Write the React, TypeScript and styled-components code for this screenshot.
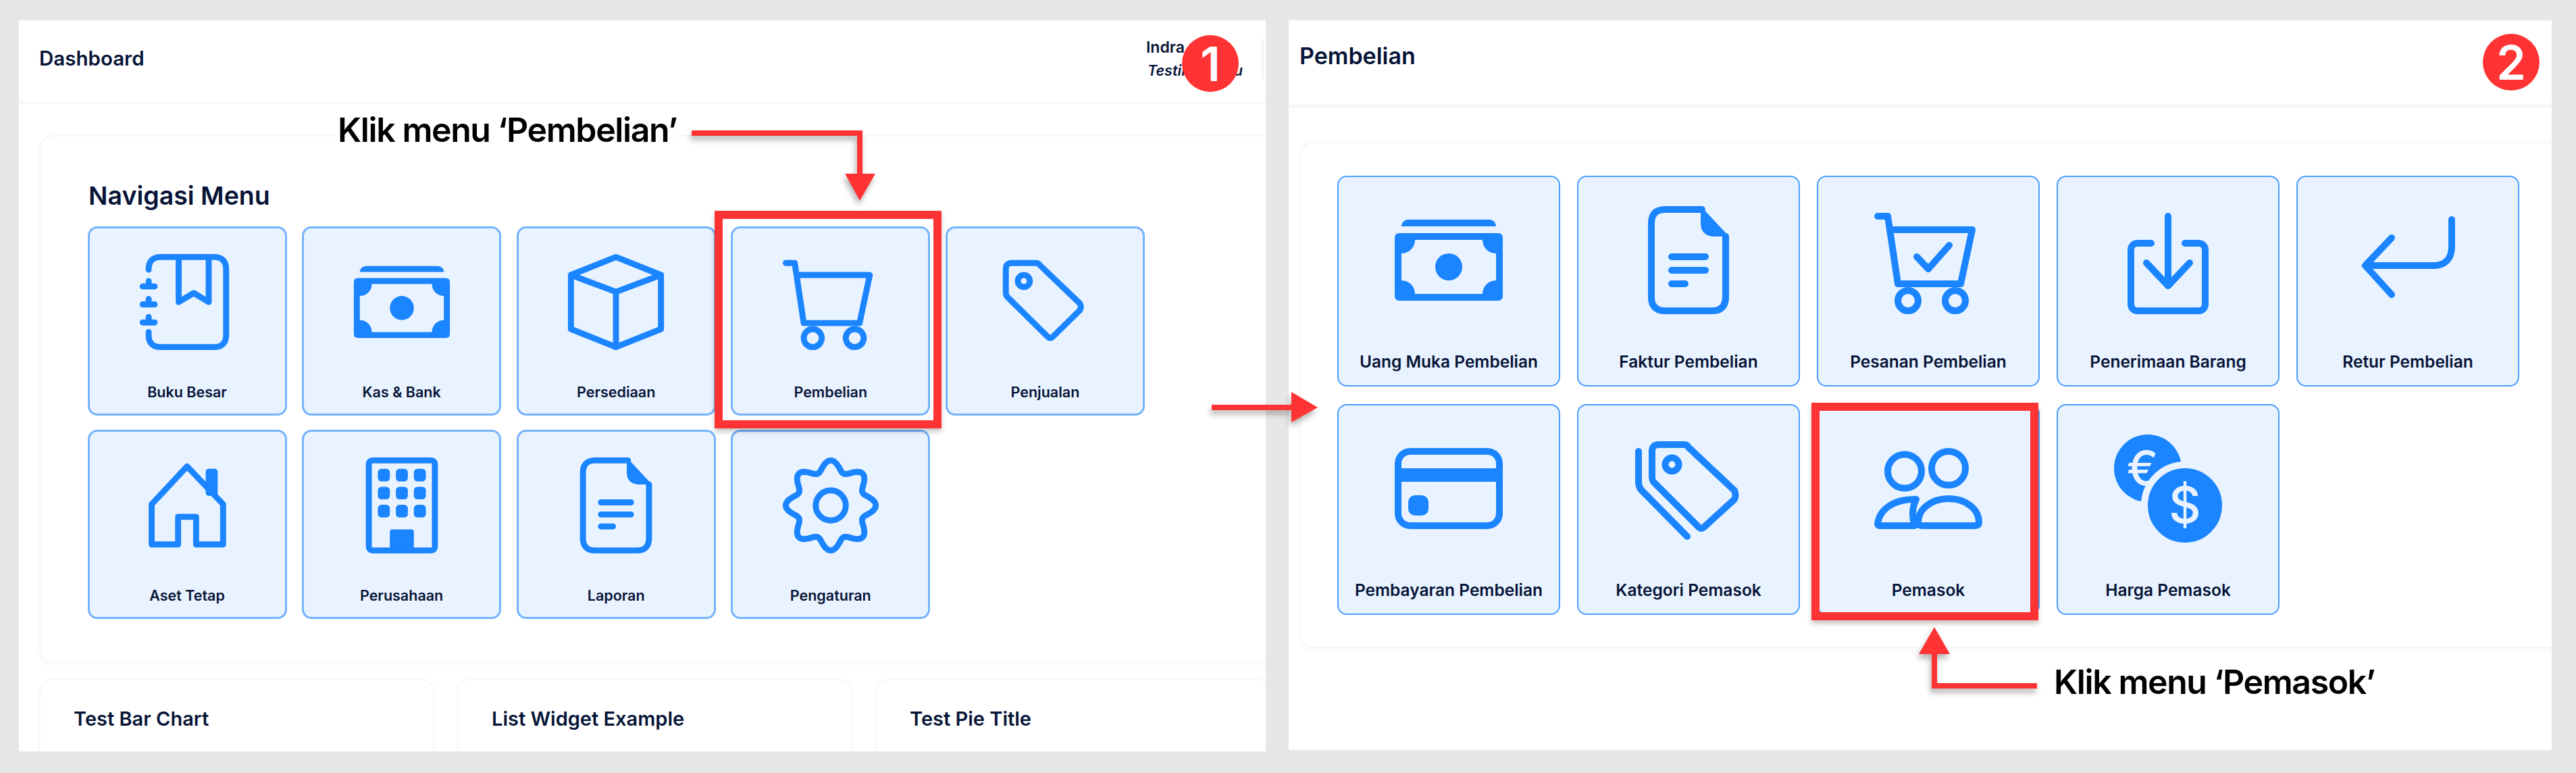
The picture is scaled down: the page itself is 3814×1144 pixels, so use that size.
import React from 'react';
import styled, { createGlobalStyle } from 'styled-components';

const BLUE = '#1B84FF';
const TILE_BG = '#E9F3FF';
const INK = '#071437';
const RED = '#FF3333';

const gearPath = () => {
  const pts: string[] = [];
  for (let i = 0; i < 160; i++) {
    const a = (i / 160) * Math.PI * 2;
    const r = 66 + 9 * Math.cos(8 * a);
    pts.push(`${(90 + r * Math.sin(a)).toFixed(1)} ${(90 - r * Math.cos(a)).toFixed(1)}`);
  }
  return `M${pts.join('L')}Z`;
};

const ICONS: Record<string, React.ReactNode> = {
  book: (
    <>
      <path d="M26 36V35C26 22 33 15 46 15H135C148 15 155 22 155 35V145C155 158 148 165 135 165H46C33 165 26 158 26 145V140" />
      <path d="M76 15V90L101 75L126 90V15" />
      <path d="M16 64H36M26 55V64M16 94H36M26 85V94M16 124H36M26 115V124" />
    </>
  ),
  cash: (
    <>
      <path
        className="solid"
        fillRule="evenodd"
        d="M17 50H163Q170 50 170 57V143Q170 150 163 150H17Q10 150 10 143V57Q10 50 17 50ZM40 60A20 20 0 0 1 20 80V120A20 20 0 0 1 40 140H140A20 20 0 0 1 160 120V80A20 20 0 0 1 140 60Z"
      />
      <path className="solid" d="M20 40C20 34 25 30 30 30H150C155 30 160 34 160 40Z" />
      <circle className="solid" cx="90" cy="100" r="20" />
    </>
  ),
  box: (
    <>
      <path d="M90 15L165 45V135L90 165L15 135V45Z" />
      <path d="M15 45L90 73L165 45M90 73V165" />
    </>
  ),
  cart: (
    <>
      <path d="M15 25H30L33 45L45 125H138L155 45H33" />
      <circle cx="60" cy="150" r="15" />
      <circle cx="130" cy="150" r="15" />
    </>
  ),
  cartCheck: (
    <>
      <path d="M15 25H30L33 45L45 125H138L155 45H33" />
      <circle cx="60" cy="150" r="15" />
      <circle cx="130" cy="150" r="15" />
      <path d="M73 85L90 103L121 68" />
    </>
  ),
  tag: (
    <>
      <path d="M25 35Q25 25 35 25H75Q79 25 81 28L148 92Q152 98 148 104L103 148Q99 152 95 148L28 82Q25 79 25 75Z" />
      <circle cx="55" cy="55" r="10" />
    </>
  ),
  house: (
    <>
      <path d="M31 155V88L90 25L150 88V155H105V109H75V155Z" />
      <rect className="solid" x="121" y="29" width="20" height="45" rx="5" />
    </>
  ),
  building: (
    <>
      <rect x="35" y="15" width="110" height="150" rx="6" />
      {[29, 59, 89].map(y =>
        [50, 80, 110].map(x => <rect className="solid" key={`${x}-${y}`} x={x} y={y} width="20" height="21" rx="6" />)
      )}
      <path className="solid" d="M70 165V134Q70 130 74 130H106Q110 130 110 134V165Z" />
    </>
  ),
  file: (
    <>
      <path d="M110 15H55C42 15 35 22 35 35V145C35 158 42 165 55 165H125C138 165 145 158 145 145V55" />
      <path className="solid" d="M108 10L150 55H128C116 55 108 48 108 36Z" />
      <path d="M65 85H115M65 105H115M65 125H85" />
    </>
  ),
  gear: (
    <>
      <path d={gearPath()} />
      <circle cx="90" cy="90" r="25" />
    </>
  ),
  inbox: (
    <>
      <path d="M65 65H45C39 65 35 69 35 75V155C35 161 39 165 45 165H135C141 165 145 161 145 155V75C145 69 141 65 135 65H115" />
      <path d="M90 25V128M58 94L90 128L122 94" />
    </>
  ),
  back: <path d="M155 30V70C155 88 145 98 128 98H27M66 57L27 98L66 141" />,
  card: (
    <>
      <rect x="15" y="35" width="150" height="110" rx="18" />
      <rect className="solid" x="15" y="60" width="150" height="20" />
      <rect className="solid" x="30" y="100" width="30" height="30" rx="10" />
    </>
  ),
  tags: (
    <>
      <path d="M36 35Q36 25 46 25H84Q88 25 90 29L158 93Q161 100 158 106L113 147Q109 151 105 147L38 80Q36 77 36 74Z" />
      <circle cx="65.5" cy="54.5" r="10" />
      <path d="M16 35V80Q16 86 19 91L88 161" />
    </>
  ),
  users: (
    <>
      <circle cx="55" cy="64.5" r="25" />
      <circle cx="120" cy="60" r="25" />
      <path d="M72 106C40 105 18 120 15 142Q15 145 18 145H70C65 130 66 118 72 106Z" />
      <path d="M75 140C75 120 95 105 120 105C145 105 165 120 165 140Q165 145 160 145H80Q75 145 75 140Z" />
    </>
  ),
  coins: (
    <>
      <circle className="solid" cx="60" cy="60" r="50" />
      <text className="coin" x="52" y="85" fontSize="70">€</text>
      <circle className="coinFront" cx="115" cy="115" r="60" />
      <text className="coin" x="115" y="141" fontSize="74">$</text>
    </>
  ),
};

const MAIN_MENU = [
  { label: 'Buku Besar', icon: 'book' },
  { label: 'Kas & Bank', icon: 'cash' },
  { label: 'Persediaan', icon: 'box' },
  { label: 'Pembelian', icon: 'cart' },
  { label: 'Penjualan', icon: 'tag' },
  { label: 'Aset Tetap', icon: 'house' },
  { label: 'Perusahaan', icon: 'building' },
  { label: 'Laporan', icon: 'file' },
  { label: 'Pengaturan', icon: 'gear' },
];

const PURCHASE_MENU = [
  { label: 'Uang Muka Pembelian', icon: 'cash' },
  { label: 'Faktur Pembelian', icon: 'file' },
  { label: 'Pesanan Pembelian', icon: 'cartCheck' },
  { label: 'Penerimaan Barang', icon: 'inbox' },
  { label: 'Retur Pembelian', icon: 'back' },
  { label: 'Pembayaran Pembelian', icon: 'card' },
  { label: 'Kategori Pemasok', icon: 'tags' },
  { label: 'Pemasok', icon: 'users' },
  { label: 'Harga Pemasok', icon: 'coins' },
];

const WIDGETS = ['Test Bar Chart', 'List Widget Example', 'Test Pie Title'];

export default function App() {
  return (
    <Stage>
      <GlobalStyle />
      <DashboardPanel>
        <DashboardHeader>
          <PageTitle>Dashboard</PageTitle>
          <UserBlock>
            <UserInfo>
              <UserName>Indra</UserName>
              <UserRole>Testing Menu</UserRole>
            </UserInfo>
            <Divider />
          </UserBlock>
        </DashboardHeader>
        <DashboardBody>
          <MenuCard>
            <MenuTitle>Navigasi Menu</MenuTitle>
            <MainGrid>
              {MAIN_MENU.map(({ label, icon }) => (
                <MainTile key={label}>
                  <MainIcon viewBox="0 0 180 180">{ICONS[icon]}</MainIcon>
                  <MainLabel>{label}</MainLabel>
                </MainTile>
              ))}
            </MainGrid>
          </MenuCard>
          <WidgetRow>
            {WIDGETS.map(title => (
              <WidgetCard key={title}>
                <WidgetTitle>{title}</WidgetTitle>
                {title === 'Test Pie Title' && (
                  <PieChart viewBox="0 0 160 160">
                    <path d="M78 0.5A80 80 0 0 0 20 27L80 80Z" fill="#F8C4CE" />
                    <path d="M82 0.5A80 80 0 0 1 140 27L80 80Z" fill="#B5D8F7" />
                  </PieChart>
                )}
              </WidgetCard>
            ))}
          </WidgetRow>
        </DashboardBody>
      </DashboardPanel>

      <PurchasePanel>
        <PurchaseHeader>
          <PurchaseTitle>Pembelian</PurchaseTitle>
        </PurchaseHeader>
        <PurchaseBody>
          <PurchaseCard>
            <PurchaseGrid>
              {PURCHASE_MENU.map(({ label, icon }) => (
                <PurchaseTile key={label}>
                  <PurchaseIcon viewBox="0 0 180 180">{ICONS[icon]}</PurchaseIcon>
                  <PurchaseLabel>{label}</PurchaseLabel>
                </PurchaseTile>
              ))}
            </PurchaseGrid>
          </PurchaseCard>
        </PurchaseBody>
      </PurchasePanel>

      <FrameOne />
      <FrameTwo />
      <CalloutOne>Klik menu ‘Pembelian’</CalloutOne>
      <CalloutTwo>Klik menu ‘Pemasok’</CalloutTwo>
      <BadgeOne>1</BadgeOne>
      <BadgeTwo>2</BadgeTwo>
      <ArrowLayer viewBox="0 0 3814 1144">
        <g>
          <path d="M1024 197H1273V260" />
          <polygon points="1251,257 1296,257 1273,297" />
        </g>
        <g>
          <path d="M1794 603H1915" />
          <polygon points="1912,580 1951,603 1912,625" />
        </g>
        <g>
          <path d="M3016 1015H2864V965" />
          <polygon points="2841,968 2887,968 2864,928" />
        </g>
      </ArrowLayer>
    </Stage>
  );
}

const GlobalStyle = createGlobalStyle`
  html, body {
    margin: 0;
    background: #E7E7E7;
    overflow: hidden;
    font-family: Inter, "Liberation Sans", sans-serif;
    color: ${INK};
  }
`;

const Stage = styled.div`
  position: relative;
  width: 3814px;
  height: 1144px;
  display: flex;
  align-items: flex-start;
  gap: 34px;
  padding: 30px 36px 0 28px;
  box-sizing: border-box;
`;

const Panel = styled.section`
  background: #fff;
  overflow: hidden;
  box-sizing: border-box;
`;

const DashboardPanel = styled(Panel)`
  width: 1846px;
  height: 1082px;
`;

const PurchasePanel = styled(Panel)`
  width: 1870px;
  height: 1080px;
`;

const DashboardHeader = styled.header`
  height: 124px;
  box-sizing: border-box;
  border-bottom: 4px solid #F7F8F9;
  padding: 0 0 6px 30px;
  display: flex;
  align-items: center;
  justify-content: space-between;
`;

const PurchaseHeader = styled.header`
  height: 130px;
  box-sizing: border-box;
  border-bottom: 6px solid #F7F8F9;
  padding: 0 0 16px 16px;
  display: flex;
  align-items: center;
`;

const PageTitle = styled.h1`
  margin: 0 0 3px;
  font-size: 29.5px;
  font-weight: 600;
`;

const PurchaseTitle = styled(PageTitle)`
  font-size: 34px;
`;

const UserBlock = styled.div`
  display: flex;
  align-items: center;
  gap: 32px;
  margin-right: 3px;
`;

const UserInfo = styled.div`
  width: 139px;
  display: flex;
  flex-direction: column;
  gap: 8px;
  line-height: 26px;
  white-space: nowrap;
`;

const UserName = styled.span`
  font-size: 23px;
  font-weight: 600;
`;

const UserRole = styled.span`
  font-size: 21.5px;
  font-weight: 600;
  font-style: italic;
  margin-left: 2px;
`;

const Divider = styled.span`
  width: 3px;
  height: 60px;
  background: #F3F4F6;
`;

const DashboardBody = styled.div`
  padding: 46px 0 0 30px;
`;

const MenuCard = styled.div`
  width: 2000px;
  height: 781px;
  box-sizing: border-box;
  border: 2px solid #F5F6F7;
  border-radius: 20px;
  box-shadow: 0 6px 12px rgba(0, 0, 0, 0.015);
  padding: 63px 0 0 69.5px;
`;

const MenuTitle = styled.h2`
  margin: 0 0 20px 1.5px;
  height: 50px;
  line-height: 50px;
  font-size: 37.5px;
  font-weight: 600;
`;

const MainGrid = styled.div`
  display: grid;
  grid-template-columns: repeat(5, 295px);
  grid-auto-rows: 279.5px;
  gap: 21.5px 22.6px;
`;

const Tile = styled.div`
  box-sizing: border-box;
  background: ${TILE_BG};
  display: flex;
  flex-direction: column;
  align-items: center;
`;

const MainTile = styled(Tile)`
  border: 3px solid #74B3FF;
  border-radius: 14px;
  padding-top: 29px;
`;

const PurchaseTile = styled(Tile)`
  border: 2px solid #4D9FFF;
  border-radius: 14px;
  padding-top: 33px;
`;

const TileIcon = styled.svg`
  flex: none;
  fill: none;
  stroke: ${BLUE};
  stroke-width: 10;
  stroke-linecap: round;
  stroke-linejoin: round;

  .solid {
    fill: ${BLUE};
    stroke: none;
  }

  .coinFront {
    fill: ${BLUE};
    stroke: ${TILE_BG};
    stroke-width: 10;
  }

  .coin {
    fill: ${TILE_BG};
    stroke: none;
    font-family: Inter, sans-serif;
    font-weight: 500;
    text-anchor: middle;
  }
`;

const MainIcon = styled(TileIcon)`
  width: 160px;
  height: 160px;
`;

const PurchaseIcon = styled(TileIcon)`
  width: 180px;
  height: 180px;
`;

const MainLabel = styled.span`
  margin-top: 39px;
  font-size: 21.5px;
  line-height: 28px;
  font-weight: 600;
`;

const PurchaseLabel = styled.span`
  margin-top: 45px;
  font-size: 24.5px;
  line-height: 30px;
  font-weight: 600;
`;

const WidgetRow = styled.div`
  display: grid;
  grid-template-columns: repeat(3, 585px);
  gap: 34px;
  margin-top: 23px;
`;

const WidgetCard = styled.div`
  height: 300px;
  box-sizing: border-box;
  border: 2px solid #F6F7F8;
  border-radius: 20px;
  padding: 40px 0 0 49px;
  display: flex;
  flex-direction: column;
`;

const WidgetTitle = styled.h3`
  margin: 0;
  font-size: 29px;
  line-height: 36px;
  font-weight: 600;
`;

const PieChart = styled.svg`
  flex: none;
  width: 160px;
  height: 160px;
  margin: 31px 0 0 194px;
`;

const PurchaseBody = styled.div`
  padding: 50px 0 0 16px;
`;

const PurchaseCard = styled.div`
  width: 2000px;
  height: 749px;
  box-sizing: border-box;
  border: 2px solid #F4F5F6;
  border-radius: 20px;
  box-shadow: 0 6px 12px rgba(0, 0, 0, 0.02);
  padding: 48px 0 0 54px;
`;

const PurchaseGrid = styled.div`
  display: grid;
  grid-template-columns: repeat(5, 330px);
  grid-auto-rows: 312px;
  gap: 26px 25px;
`;

const Frame = styled.div`
  position: absolute;
  box-sizing: border-box;
  border: 12px solid ${RED};
  box-shadow: 0 5px 7px rgba(0, 0, 0, 0.22);
`;

const FrameOne = styled(Frame)`
  left: 1058px;
  top: 312px;
  width: 336px;
  height: 322px;
`;

const FrameTwo = styled(Frame)`
  left: 2682px;
  top: 596px;
  width: 336px;
  height: 322px;
`;

const Callout = styled.div`
  position: absolute;
  font-size: 50px;
  line-height: 56px;
  font-weight: 600;
  letter-spacing: -1.4px;
  color: #000;
  white-space: nowrap;
`;

const CalloutOne = styled(Callout)`
  left: 500px;
  top: 164px;
  background: #fff;
`;

const CalloutTwo = styled(Callout)`
  left: 3041px;
  top: 981px;
`;

const Badge = styled.div`
  position: absolute;
  width: 84px;
  height: 84px;
  border-radius: 50%;
  background: ${RED};
  color: #fff;
  font-size: 70px;
  font-weight: 600;
  display: flex;
  align-items: center;
  justify-content: center;
`;

const BadgeOne = styled(Badge)`
  left: 1750px;
  top: 52px;
`;

const BadgeTwo = styled(Badge)`
  left: 3676px;
  top: 50px;
`;

const ArrowLayer = styled.svg`
  position: absolute;
  left: 0;
  top: 0;
  width: 3814px;
  height: 1144px;
  pointer-events: none;

  g {
    filter: drop-shadow(-2px 6px 4px rgba(0, 0, 0, 0.3));
  }

  path {
    fill: none;
    stroke: ${RED};
    stroke-width: 8;
  }

  polygon {
    fill: ${RED};
  }
`;
